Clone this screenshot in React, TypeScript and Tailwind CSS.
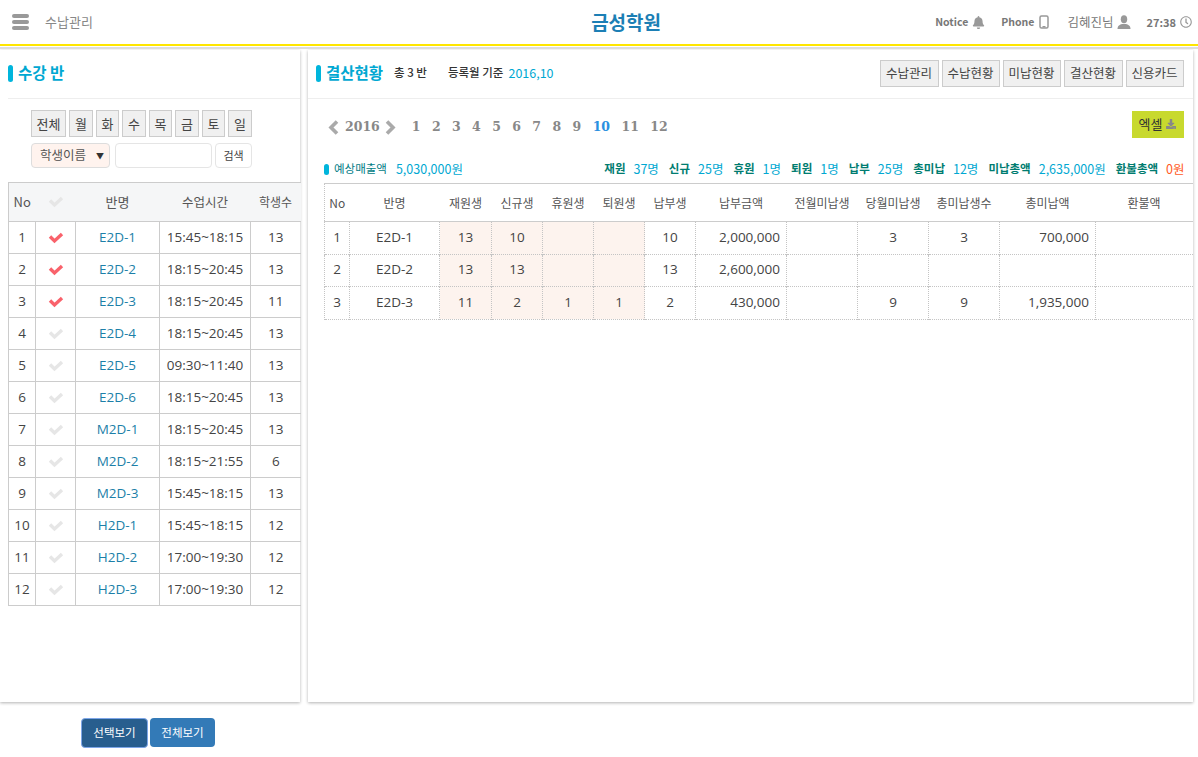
import React from "react";
import { FaBell, FaRegClock, FaDownload } from "react-icons/fa";

const classes = [
  ["E2D-1", "15:45~18:15", "13", true],
  ["E2D-2", "18:15~20:45", "13", true],
  ["E2D-3", "18:15~20:45", "11", true],
  ["E2D-4", "18:15~20:45", "13", false],
  ["E2D-5", "09:30~11:40", "13", false],
  ["E2D-6", "18:15~20:45", "13", false],
  ["M2D-1", "18:15~20:45", "13", false],
  ["M2D-2", "18:15~21:55", "6", false],
  ["M2D-3", "15:45~18:15", "13", false],
  ["H2D-1", "15:45~18:15", "12", false],
  ["H2D-2", "17:00~19:30", "12", false],
  ["H2D-3", "17:00~19:30", "12", false],
] as const;

const days = [
  ["전체", "w-[35px]"],
  ["월", "w-[24px]"],
  ["화", "w-[23px]"],
  ["수", "w-[24px]"],
  ["목", "w-[23px]"],
  ["금", "w-[24px]"],
  ["토", "w-[23px]"],
  ["일", "w-[24px]"],
];

const tabs = [
  ["수납관리", "w-[59px]"],
  ["수납현황", "w-[58px]"],
  ["미납현황", "w-[58px]"],
  ["결산현황", "w-[59px]"],
  ["신용카드", "w-[58px]"],
];

const heads = ["No", "반명", "재원생", "신규생", "휴원생", "퇴원생", "납부생", "납부금액", "전월미납생", "당월미납생", "총미납생수", "총미납액", "환불액"];
const widths = [25, 90, 52, 51, 51, 51, 51, 91, 71, 71, 71, 96, 97];
const rows = [
  ["1", "E2D-1", "13", "10", "", "", "10", "2,000,000", "", "3", "3", "700,000", ""],
  ["2", "E2D-2", "13", "13", "", "", "13", "2,600,000", "", "", "", "", ""],
  ["3", "E2D-3", "11", "2", "1", "1", "2", "430,000", "", "9", "9", "1,935,000", ""],
];

const stats = [
  ["재원", "37명"],
  ["신규", "25명"],
  ["휴원", "1명"],
  ["퇴원", "1명"],
  ["납부", "25명"],
  ["총미납", "12명"],
  ["미납총액", "2,635,000원"],
];

function Marker({ cls }: { cls: string }) {
  return <span className={`inline-block rounded-[3px] bg-[#00b5dc] ${cls}`} />;
}

function Check({ cls }: { cls: string }) {
  return (
    <svg viewBox="0 0 16 12" className={`w-[16px] h-[12px] mx-auto ${cls}`}>
      <polyline points="2,4.5 6.5,9 14,2" fill="none" stroke="currentColor" strokeWidth="3.4" />
    </svg>
  );
}

function Chevron({ right }: { right?: boolean }) {
  return (
    <svg viewBox="0 0 11 15" className="w-[11px] h-[15px] text-[#aaa]">
      <polyline points={right ? "2,1.5 8,7.5 2,13.5" : "9,1.5 3,7.5 9,13.5"} fill="none" stroke="currentColor" strokeWidth="3.6" />
    </svg>
  );
}

export default function App() {
  return (
    <div className="w-[1198px] h-[757px] overflow-hidden bg-white text-[#444] text-[13px] font-['Noto_Sans_CJK_KR','Noto_Sans',sans-serif]">
      <header className="h-[46px] border-b-[2px] border-b-[#ffe600] flex items-center shadow-[0_1px_0_#fff,0_3px_0_#ddd] relative">
        <div className="w-[192px] pl-3 flex items-center gap-[16px] text-[#888]">
          <span className="flex flex-col gap-[2px] w-[17px]">
            <span className="h-[4px] rounded-full bg-[#999]" />
            <span className="h-[4px] rounded-full bg-[#999]" />
            <span className="h-[4px] rounded-full bg-[#999]" />
          </span>
          <span>수납관리</span>
        </div>
        <div className="flex-1 text-center text-[#1c7fb5] text-[19px] font-bold pl-[125px]">금성학원</div>
        <div className="flex items-center text-[#777] text-[11px] font-bold pr-[6px]">
          <span className="text-[10.5px]">Notice</span>
          <FaBell className="ml-[4px] w-[13px] h-[13px] text-[#999]" />
          <span className="ml-[16px] text-[10.5px]">Phone</span>
          <svg viewBox="0 0 10 14" className="ml-[5px] w-[10px] h-[14px] text-[#999]">
            <rect x="1" y="1" width="8" height="12" rx="1.5" fill="none" stroke="currentColor" strokeWidth="1.5" />
            <rect x="3.5" y="11" width="3" height="1.5" fill="currentColor" />
          </svg>
          <span className="ml-[18px] text-[12.5px] font-normal">김혜진님</span>
          <svg viewBox="0 0 14 14" className="ml-[4px] w-[14px] h-[14px] text-[#999]">
            <ellipse cx="7" cy="4.2" rx="3.2" ry="4" fill="currentColor" />
            <path d="M0.5 14 C0.5 10.5 3 9.6 5 9 L9 9 C11 9.6 13.5 10.5 13.5 14 Z" fill="currentColor" />
          </svg>
          <span className="ml-[15px]">27:38</span>
          <FaRegClock className="ml-[4px] w-[12px] h-[12px] text-[#999]" />
        </div>
      </header>

      <div className="flex gap-2 pt-[4px] pr-[6px]">
        <section className="w-[300px] h-[652px] bg-white shadow-[0_1px_3px_rgba(0,0,0,0.3)] pl-2">
          <div className="h-[49px] border-b border-[#eee] flex items-center gap-[5px] text-[#00a8d2] text-[15.5px] font-bold pb-[5px] pt-[3px]">
            <Marker cls="w-[5px] h-[17px]" />
            <span>수강 반</span>
          </div>
          <div className="pl-[23px] pt-[11px] flex gap-[3px]">
            {days.map(([d, w]) => (
              <button key={d} className={`${w} h-[27px] border border-[#ccc] bg-[#f0f0f0] text-[#444] text-[13px] leading-none shrink-0`}>{d}</button>
            ))}
          </div>
          <div className="pl-[23px] pt-[6px] flex items-center h-[31px]">
            <div className="w-[79px] h-[25px] border border-[#ddd] rounded-[4px] bg-[#fff3ee] flex items-center justify-between pl-[8px] pr-[5px] text-[#555] text-[12.5px]">
              <span>학생이름</span><span className="text-[8px] text-[#333]">▼</span>
            </div>
            <div className="w-[97px] h-[25px] ml-[5px] border border-[#e5e5e5] rounded-[4px]" />
            <button className="w-[37px] h-[25px] ml-[3px] border border-[#e5e5e5] rounded-[4px] bg-white text-[11px] text-[#444]">검색</button>
          </div>
          <table className="mt-[14px] w-[292px] table-fixed border-collapse">
            <colgroup>
              <col className="w-[27px]" /><col className="w-[40px]" /><col className="w-[84px]" /><col className="w-[91px]" /><col className="w-[50px]" />
            </colgroup>
            <thead>
              <tr className="h-[39px] bg-[#f5f6f7] border-y border-[#ccc]">
                <th className="font-normal text-[#555] border-l border-[#ccc]">No</th>
                <th className="font-normal"><Check cls="text-[#e6e6e6]" /></th>
                <th className="font-normal text-[#555]">반명</th>
                <th className="font-normal text-[#555] text-[12.5px]">수업시간</th>
                <th className="font-normal text-[#555] text-[12px]">학생수</th>
              </tr>
            </thead>
            <tbody className="font-['Open_Sans','Noto_Sans_CJK_KR',sans-serif] text-[13.5px]">
              {classes.map(([n, t, c, on], i) => (
                <tr key={n} className="h-[32px] border-b border-[#ccc] text-center">
                  <td className="border-x border-[#ccc] pb-[1px]">{i + 1}</td>
                  <td className="border-r border-[#ccc]"><Check cls={on ? "text-[#f9626b]" : "text-[#e6e6e6]"} /></td>
                  <td className="border-r border-[#ccc] text-[#1c7fa8] pb-[1px]">{n}</td>
                  <td className="border-r border-[#ccc] pb-[1px]">{t}</td>
                  <td className="pb-[1px]">{c}</td>
                </tr>
              ))}
            </tbody>
          </table>
        </section>

        <section className="flex-1 h-[652px] bg-white shadow-[0_1px_3px_rgba(0,0,0,0.3)]">
          <div className="h-[49px] border-b border-[#eee] flex items-center pl-2 pr-[9px] pt-[3px] pb-[5px]">
            <Marker cls="w-[5px] h-[17px]" />
            <span className="ml-[5px] text-[#00a8d2] text-[15.5px] font-bold">결산현황</span>
            <span className="ml-[11px] text-[11.5px] text-[#333] font-medium">총 3 반</span>
            <span className="ml-[21px] text-[11.5px] text-[#333] font-medium">등록월 기준</span>
            <span className="ml-[5px] text-[12.5px] text-[#00a8d2]">2016,10</span>
            <div className="ml-auto flex gap-[3px]">
              {tabs.map(([t, w]) => (
                <button key={t} className={`${w} h-[27px] border border-[#ccc] bg-[#f0f0f0] text-[12.5px] text-[#444] leading-none`}>{t}</button>
              ))}
            </div>
          </div>
          <div className="flex items-center h-[56px] pl-[20px] pr-[9px]">
            <Chevron />
            <span className="ml-[6px] font-['DejaVu_Serif',serif] font-bold text-[#888] text-[12.5px]">2016</span>
            <span className="ml-[5px]"><Chevron right /></span>
            <div className="ml-[16px] flex gap-[11.4px] font-['DejaVu_Serif',serif] font-bold text-[#888] text-[12.5px]">
              {[1, 2, 3, 4, 5, 6, 7, 8, 9, 10, 11, 12].map((m) => (
                <span key={m} className={m === 10 ? "text-[#2a90e0]" : ""}>{m}</span>
              ))}
            </div>
            <button className="ml-auto -mt-[6px] w-[52px] h-[27px] bg-[#c8d92e] text-[#333] text-[13px] flex items-center justify-center gap-[4px]">
              엑셀<FaDownload className="w-[10px] h-[10px] text-[#888]" />
            </button>
          </div>
          <div className="flex items-center h-[28px] pl-[16px] pr-[8px] text-[12.5px]">
            <Marker cls="w-[5px] h-[11px]" />
            <span className="ml-[5px] text-[#007c85] text-[11.5px]">예상매출액</span>
            <span className="ml-[9px] text-[#00a8d2]">5,030,000원</span>
            <div className="ml-auto flex items-center">
              {stats.map(([k, v]) => (
                <React.Fragment key={k}>
                  <span className="font-bold text-[#007c70] text-[11.5px] ml-[10px]">{k}</span>
                  <span className="text-[#00a8d2] ml-[8px]">{v}</span>
                </React.Fragment>
              ))}
              <span className="font-bold text-[#007c70] text-[11.5px] ml-[10px]">환불총액</span>
              <span className="text-[#ff5a1e] ml-[8px]">0원</span>
            </div>
          </div>
          <table className="ml-[16px] w-[868px] table-fixed border-collapse">
            <colgroup>
              {widths.map((w, i) => <col key={i} style={{ width: w }} />)}
            </colgroup>
            <thead>
              <tr className="h-[38px] border-y border-[#ccc]">
                {heads.map((h, i) => <th key={h} className={`font-normal text-[#555] text-[12px] ${i === 0 ? "border-l border-dotted border-[#c4c4c4]" : ""}`}>{h}</th>)}
              </tr>
            </thead>
            <tbody className="font-['Open_Sans','Noto_Sans_CJK_KR',sans-serif] text-[13.5px]">
              {rows.map((r, ri) => (
                <tr key={ri} className="h-[32.5px] border-b border-dotted border-[#c4c4c4]">
                  {r.map((c, i) => (
                    <td
                      key={i}
                      className={`pb-[2px] ${i < 12 ? "border-r border-dotted border-[#c4c4c4]" : ""} ${i === 0 ? "border-l" : ""} ${i >= 2 && i <= 5 ? "bg-[#fdf3ee]" : ""} ${i === 7 || i === 11 ? "text-right pr-[6px]" : "text-center"}`}
                    >
                      {c}
                    </td>
                  ))}
                </tr>
              ))}
            </tbody>
          </table>
        </section>
      </div>

      <div className="flex pl-[81px] pt-[16px] gap-[2px]">
        <button className="w-[67px] h-[30px] rounded-[4px] bg-[#285e8e] border border-[#7ea6e8] text-white text-[11.5px]">선택보기</button>
        <button className="w-[65px] h-[29px] rounded-[4px] bg-[#337ab7] text-white text-[11.5px]">전체보기</button>
      </div>
    </div>
  );
}
